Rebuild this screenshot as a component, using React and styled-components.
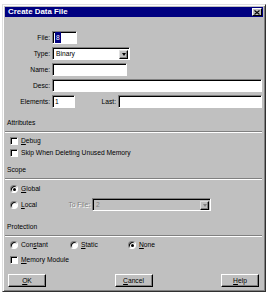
import React from "react";
import styled, { createGlobalStyle } from "styled-components";

const GlobalStyle = createGlobalStyle`
  html, body { margin: 0; padding: 0; background: #fff; }
  body { font-family: "Liberation Sans", Arial, sans-serif; font-size: 6.7px; color: #000; }
  * { box-sizing: border-box; }
`;

const Page = styled.div`
  padding: 4px 0 0 2px;
`;

const Dialog = styled.div`
  width: 264px;
  height: 288px;
  background: #c0c0c0;
  border: 1px solid;
  border-color: #dfdfdf #303030 #303030 #dfdfdf;
  box-shadow: inset 1px 1px #fff, inset -1px -1px #808080;
  padding: 2px 2px 2px 2px;
  display: flex;
  flex-direction: column;
`;

const TitleBar = styled.div`
  height: 10px;
  background: #000080;
  color: #fff;
  display: flex;
  align-items: center;
  justify-content: space-between;
  padding: 0 1px 0 3px;
`;

const Title = styled.span`
  font-weight: bold;
  font-size: 7.9px;
  line-height: 10px;
`;

const CloseBtn = styled.div`
  width: 10px;
  height: 8px;
  background: #c0c0c0;
  border: 1px solid;
  border-color: #fff #000 #000 #fff;
  display: flex;
  align-items: center;
  justify-content: center;
  color: #000;
`;

const Body = styled.div`
  display: flex;
  flex-direction: column;
  padding: 0 1px 0 0;
  flex: 1;
`;

const FormGrid = styled.div`
  margin-top: 14px;
  display: grid;
  grid-template-columns: 45px 1fr;
  column-gap: 2px;
  row-gap: 3px;
  align-items: center;
`;

const Label = styled.label`
  text-align: right;
  line-height: 13px;
  white-space: nowrap;
  color: ${(p) => (p.$disabled ? "#808080" : "#000")};
  text-shadow: ${(p) => (p.$disabled ? "1px 1px #fff" : "none")};
`;

const Field = styled.div`
  width: ${(p) => (p.$w ? `${p.$w}px` : "auto")};
  flex: ${(p) => (p.$w ? "none" : "1")};
  height: 13px;
  background: ${(p) => (p.$disabled ? "#c0c0c0" : "#fff")};
  border: 1px solid;
  border-color: #808080 #fff #fff #808080;
  box-shadow: inset 1px 1px #000;
  display: flex;
  align-items: center;
  padding: 0 1px 0 2px;
  line-height: 11px;
  color: ${(p) => (p.$disabled ? "#808080" : "#000")};
`;

const FieldText = styled.span`
  flex: 1;
  padding-left: 1px;
`;

const Selected = styled.span`
  background: #000080;
  color: #fff;
  padding: 0 1px;
`;

const ArrowBtn = styled.div`
  width: 9px;
  height: 9px;
  background: #c0c0c0;
  border: 1px solid;
  border-color: #dfdfdf #000 #000 #dfdfdf;
  box-shadow: inset -1px -1px #808080;
  display: flex;
  align-items: center;
  justify-content: center;
  margin-top: 1px;
`;

const Triangle = styled.span`
  width: 0;
  height: 0;
  border-left: 2.5px solid transparent;
  border-right: 2.5px solid transparent;
  border-top: 3px solid ${(p) => (p.$disabled ? "#808080" : "#000")};
`;

const InlineRow = styled.div`
  display: flex;
  align-items: center;
  gap: 2px;
`;

const LastLabel = styled(Label)`
  width: 39px;
`;

const SectionHead = styled.div`
  margin-top: ${(p) => p.$mt}px;
  padding-left: 2px;
  line-height: 8px;
  height: 8px;
`;

const Rule = styled.div`
  margin-top: 4px;
  height: 2px;
  border-top: 1px solid #808080;
  border-bottom: 1px solid #fff;
`;

const Options = styled.div`
  margin-top: ${(p) => p.$mt}px;
  display: flex;
  flex-direction: column;
  gap: ${(p) => p.$gap}px;
  padding-left: 5px;
`;

const OptionRow = styled.div`
  display: flex;
  align-items: center;
  gap: 3px;
  height: 9px;
  line-height: 9px;
`;

const Box = styled.span`
  width: 8px;
  height: 8px;
  background: #fff;
  border: 1px solid;
  border-color: #808080 #fff #fff #808080;
  box-shadow: inset 1px 1px #000;
  flex: none;
`;

const Radio = styled.span`
  position: relative;
  width: 8px;
  height: 8px;
  border-radius: 50%;
  background: #fff;
  border: 1px solid;
  border-color: #808080 #fff #fff #808080;
  box-shadow: inset 1px 1px #000;
  flex: none;
  &::after {
    content: "";
    display: ${(p) => (p.$checked ? "block" : "none")};
    position: absolute;
    left: 2px;
    top: 2px;
    width: 3px;
    height: 3px;
    border-radius: 50%;
    background: #000;
  }
`;

const LocalGrid = styled.div`
  display: grid;
  grid-template-columns: 55px 23px 119px;
  column-gap: 2px;
  align-items: center;
  height: 13px;
`;

const RadioCell = styled.div`
  display: flex;
  align-items: center;
  gap: 3px;
`;

const ProtGrid = styled.div`
  display: grid;
  grid-template-columns: 60px 58px 60px;
  height: 9px;
  align-items: center;
`;

const Buttons = styled.div`
  margin-top: 10px;
  display: flex;
  justify-content: space-between;
  padding: 0 3px;
`;

const Button = styled.button`
  width: 38px;
  height: 13px;
  padding: 0;
  background: #c0c0c0;
  border: 1px solid;
  border-color: #fff #000 #000 #fff;
  box-shadow: inset -1px -1px #808080;
  font-family: inherit;
  font-size: 6.7px;
  line-height: 11px;
  color: #000;
`;

export default function App() {
  return (
    <>
      <GlobalStyle />
      <Page>
        <Dialog>
          <TitleBar>
            <Title>Create Data File</Title>
            <CloseBtn>
              <svg width="6" height="5" viewBox="0 0 6 5">
                <path d="M0.5 0.5 L5.5 4.5 M5.5 0.5 L0.5 4.5" stroke="#000" strokeWidth="1.1" />
              </svg>
            </CloseBtn>
          </TitleBar>
          <Body>
            <FormGrid>
              <Label>File:</Label>
              <Field $w={25}>
                <Selected>8</Selected>
              </Field>
              <Label>Type:</Label>
              <Field $w={78}>
                <FieldText>Binary</FieldText>
                <ArrowBtn>
                  <Triangle />
                </ArrowBtn>
              </Field>
              <Label>Name:</Label>
              <Field $w={75} />
              <Label>Desc:</Label>
              <Field />
              <Label>Elements:</Label>
              <InlineRow>
                <Field $w={23}>1</Field>
                <LastLabel>Last:</LastLabel>
                <Field />
              </InlineRow>
            </FormGrid>

            <SectionHead $mt={11}>Attributes</SectionHead>
            <Rule />
            <Options $mt={3} $gap={3}>
              <OptionRow>
                <Box />
                <span>
                  <u>D</u>ebug
                </span>
              </OptionRow>
              <OptionRow>
                <Box />
                <span>Skip When Deleting Unused Memory</span>
              </OptionRow>
            </Options>

            <SectionHead $mt={9}>Scope</SectionHead>
            <Rule />
            <Options $mt={4} $gap={5}>
              <OptionRow>
                <Radio $checked />
                <span>
                  <u>G</u>lobal
                </span>
              </OptionRow>
              <LocalGrid>
                <RadioCell>
                  <Radio />
                  <span>
                    <u>L</u>ocal
                  </span>
                </RadioCell>
                <Label $disabled>To File:</Label>
                <Field $disabled>
                  <FieldText>2</FieldText>
                  <ArrowBtn>
                    <Triangle $disabled />
                  </ArrowBtn>
                </Field>
              </LocalGrid>
            </Options>

            <SectionHead $mt={12}>Protection</SectionHead>
            <Rule />
            <Options $mt={3} $gap={6}>
              <ProtGrid>
                <RadioCell>
                  <Radio />
                  <span>
                    Con<u>s</u>tant
                  </span>
                </RadioCell>
                <RadioCell>
                  <Radio />
                  <span>
                    <u>S</u>tatic
                  </span>
                </RadioCell>
                <RadioCell>
                  <Radio $checked />
                  <span>
                    <u>N</u>one
                  </span>
                </RadioCell>
              </ProtGrid>
              <OptionRow>
                <Box />
                <span>
                  <u>M</u>emory Module
                </span>
              </OptionRow>
            </Options>

            <Buttons>
              <Button>
                <u>O</u>K
              </Button>
              <Button>
                <u>C</u>ancel
              </Button>
              <Button>
                <u>H</u>elp
              </Button>
            </Buttons>
          </Body>
        </Dialog>
      </Page>
    </>
  );
}
